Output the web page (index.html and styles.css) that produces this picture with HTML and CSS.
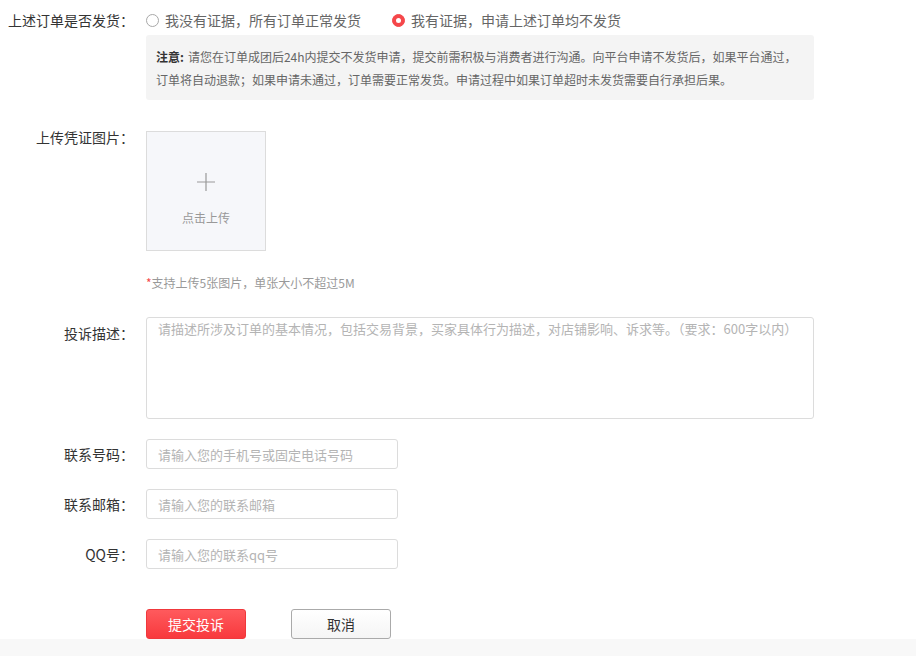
FILE: index.html
```html
<!DOCTYPE html>
<html lang="zh-CN">
<head>
<meta charset="utf-8">
<title>投诉</title>
<link rel="stylesheet" href="styles.css">
</head>
<body>
<div class="page">
  <form class="form">
    <div class="row row-ship">
      <div class="label">上述订单是否发货：</div>
      <div class="field radios">
        <label class="radio"><span class="dot"></span>我没有证据，所有订单正常发货</label>
        <label class="radio checked"><span class="dot"></span>我有证据，申请上述订单均不发货</label>
      </div>
    </div>
    <div class="row row-note">
      <div class="label"></div>
      <div class="note">
        <div class="note-line"><strong class="note-title">注意:</strong><span>请您在订单成团后24h内提交不发货申请，提交前需积极与消费者进行沟通。向平台申请不发货后，如果平台通过，</span></div>
        <div class="note-line">订单将自动退款；如果申请未通过，订单需要正常发货。申请过程中如果订单超时未发货需要自行承担后果。</div>
      </div>
    </div>
    <div class="row row-upload">
      <div class="label">上传凭证图片：</div>
      <div class="field">
        <div class="upload">
          <svg class="plus" width="18" height="18" viewBox="0 0 18 18"><path d="M9 0V18M0 9H18" stroke="#999" stroke-width="1.2" fill="none"/></svg>
          <span class="upload-text">点击上传</span>
        </div>
      </div>
    </div>
    <div class="row row-hint">
      <div class="label"></div>
      <div class="hint"><span class="star">*</span>支持上传5张图片，单张大小不超过5M</div>
    </div>
    <div class="row row-desc">
      <div class="label">投诉描述：</div>
      <div class="field"><textarea class="textarea" placeholder="请描述所涉及订单的基本情况，包括交易背景，买家具体行为描述，对店铺影响、诉求等。（要求：600字以内）"></textarea></div>
    </div>
    <div class="row row-input">
      <div class="label">联系号码：</div>
      <div class="field"><input class="input" type="text" placeholder="请输入您的手机号或固定电话号码"></div>
    </div>
    <div class="row row-input">
      <div class="label">联系邮箱：</div>
      <div class="field"><input class="input" type="text" placeholder="请输入您的联系邮箱"></div>
    </div>
    <div class="row row-input">
      <div class="label">QQ号：</div>
      <div class="field"><input class="input" type="text" placeholder="请输入您的联系qq号"></div>
    </div>
    <div class="row row-actions">
      <div class="label"></div>
      <div class="actions">
        <button type="button" class="btn btn-primary">提交投诉</button>
        <button type="button" class="btn btn-default">取消</button>
      </div>
    </div>
  </form>
  <div class="footer-band"></div>
</div>
</body>
</html>
```
FILE: styles.css
```css
* { box-sizing: border-box; }
html, body { margin: 0; padding: 0; background: #fff; }
body {
  font-family: "Noto Sans CJK SC", "Liberation Sans", sans-serif;
  font-size: 14px;
  color: #333;
  height: 656px;
  overflow: hidden;
}
.page { display: flex; flex-direction: column; height: 656px; }
.form { flex: 1; padding-top: 10px; }
.row { display: grid; grid-template-columns: 134px 1fr; column-gap: 12px; }
.label {
  text-align: right;
  line-height: 20px;
  font-size: 14px;
  color: #333;
  white-space: nowrap;
}
.radios { display: flex; align-items: center; height: 20px; }
.radio {
  display: flex;
  align-items: center;
  color: #666;
  font-size: 14px;
  line-height: 20px;
  margin-right: 31px;
}
.dot {
  width: 13px;
  height: 13px;
  border-radius: 50%;
  border: 1px solid #a8a8a8;
  margin-right: 6px;
  background: #fff;
  position: relative;
}
.radio.checked .dot { background: #f5474a; border-color: #f5474a; }
.radio.checked .dot::after {
  content: "";
  position: absolute;
  left: 3px; top: 3px;
  width: 5px; height: 5px;
  border-radius: 50%;
  background: #fff;
}
.row-note { margin-top: 5px; }
.note {
  width: 668px;
  background: #f4f4f4;
  border-radius: 3px;
  padding: 10px 10px 9px 10px;
  font-size: 12px;
  line-height: 23px;
  color: #666;
}
.note-line { display: flex; white-space: nowrap; }
.note-title { color: #333; font-weight: bold; margin-right: 4px; }
.row-upload { margin-top: 31px; }
.row-upload .label { margin-top: -4px; }
.upload {
  width: 120px;
  height: 120px;
  border: 1px solid #dcdcdc;
  background: #f6f7fa;
  display: flex;
  flex-direction: column;
  align-items: center;
  padding-top: 41px;
}
.upload-text { margin-top: 18px; font-size: 12px; color: #999; line-height: 18px; }
.row-hint { margin-top: 22px; }
.hint { font-size: 12px; line-height: 20px; color: #999; }
.star { color: #f5474a; }
.row-desc { margin-top: 24px; }
.row-desc .label { margin-top: 6px; }
.textarea {
  display: block;
  width: 668px;
  height: 102px;
  border: 1px solid #dcdcdc;
  border-radius: 3px;
  padding: 2px 11px;
  font-family: inherit;
  font-size: 13px;
  line-height: 18px;
  resize: none;
  outline: none;
  color: #333;
}
.textarea::placeholder, .input::placeholder { color: #b4b4b4; }
.row-input { margin-top: 20px; align-items: center; }
.input {
  display: block;
  width: 252px;
  height: 30px;
  border: 1px solid #dcdcdc;
  border-radius: 3px;
  padding: 0 11px;
  font-family: inherit;
  font-size: 13px;
  outline: none;
  color: #333;
}
.row-actions { margin-top: 40px; }
.actions { display: flex; gap: 45px; }
.btn {
  width: 100px;
  height: 30px;
  border-radius: 3px;
  font-family: inherit;
  font-size: 14px;
  cursor: pointer;
  padding: 0;
}
.btn-primary {
  color: #fff;
  border: 1px solid #f0383c;
  background: linear-gradient(#ff5a5d, #f8393d);
}
.btn-default {
  color: #333;
  border: 1px solid #aaa;
  background: linear-gradient(#fff, #f5f5f5);
}
.footer-band { height: 17px; background: #f8f8f8; }
```
